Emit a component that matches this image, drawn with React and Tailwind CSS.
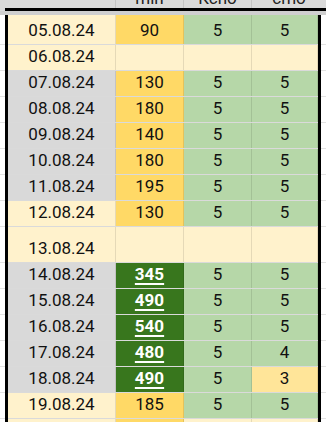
const Y = "bg-[#fff2cc]";
const O = "bg-[#ffd966]";
const G = "bg-[#b6d7a8]";
const D = "bg-[#38761d]";
const GR = "bg-[#d9d9d9]";
const P = "bg-[#ffe599]";

const rows = [
  { date: "05.08.24", dc: Y, min: "90", mc: O, a: "5", ac: G, b: "5", bc: G, h: "h-[30px]" },
  { date: "06.08.24", dc: Y, min: "", mc: Y, a: "", ac: Y, b: "", bc: Y },
  { date: "07.08.24", dc: GR, min: "130", mc: O, a: "5", ac: G, b: "5", bc: G },
  { date: "08.08.24", dc: GR, min: "180", mc: O, a: "5", ac: G, b: "5", bc: G },
  { date: "09.08.24", dc: GR, min: "140", mc: O, a: "5", ac: G, b: "5", bc: G },
  { date: "10.08.24", dc: GR, min: "180", mc: O, a: "5", ac: G, b: "5", bc: G },
  { date: "11.08.24", dc: GR, min: "195", mc: O, a: "5", ac: G, b: "5", bc: G },
  { date: "12.08.24", dc: Y, min: "130", mc: O, a: "5", ac: G, b: "5", bc: G },
  { date: "13.08.24", dc: Y, min: "", mc: Y, a: "", ac: Y, b: "", bc: Y, h: "h-[36px]" },
  { date: "14.08.24", dc: GR, min: "345", mc: D, a: "5", ac: G, b: "5", bc: G, big: true },
  { date: "15.08.24", dc: GR, min: "490", mc: D, a: "5", ac: G, b: "5", bc: G, big: true },
  { date: "16.08.24", dc: GR, min: "540", mc: D, a: "5", ac: G, b: "5", bc: G, big: true },
  { date: "17.08.24", dc: GR, min: "480", mc: D, a: "5", ac: G, b: "4", bc: G, big: true },
  { date: "18.08.24", dc: GR, min: "490", mc: D, a: "5", ac: G, b: "3", bc: P, big: true },
  { date: "19.08.24", dc: Y, min: "185", mc: O, a: "5", ac: G, b: "5", bc: G },
  { date: "", dc: Y, min: "", mc: O, a: "", ac: Y, b: "", bc: Y },
];

// sheet cells are bottom-aligned like in Google Sheets
const Cell = ({ w, bg, children, big }) => (
  <div
    className={`${w} ${bg} flex items-end justify-center pb-[1px] border-r border-black/10 ${
      big ? "text-white font-bold underline underline-offset-[3px] decoration-[1.5px]" : "text-[#111]"
    }`}
  >
    {children}
  </div>
);

export default function App() {
  return (
    <div className="w-[326px] h-[422px] overflow-hidden bg-[#f3f3f3] font-['Roboto',sans-serif] text-[17px]">
      <div className="flex h-[8px] overflow-hidden bg-[#dadada] text-[#222]">
        <div className="w-[116px] border-r border-[#c4c4c4]" />
        {["min", "Kcno", "cmo"].map((t, i) => (
          <div
            key={t}
            className={`${i === 2 ? "w-[74px]" : "w-[68px] border-r border-[#c4c4c4]"} overflow-hidden`}
          >
            <div className="-mt-[12px] leading-[20px] text-center">{t}</div>
          </div>
        ))}
      </div>
      <div className="flex h-[3px]">
        <div className="w-[5px] bg-[#dadada]" />
        <div className="flex-1 bg-black" />
      </div>
      <div className="h-[4px] bg-[#cfcfcf]" />
      {rows.map((r, i) => (
        <div key={i} className={`flex ${r.h || "h-[26px]"}`}>
          <div className="w-[5px] bg-white border-b border-[#e2e2e2]" />
          <div className="w-[3px] bg-black" />
          <div className="flex flex-1 border-b border-black/10">
            <Cell w="w-[108px]" bg={r.dc}>{r.date}</Cell>
            <Cell w="w-[68px]" bg={r.mc} big={r.big}>{r.min}</Cell>
            <Cell w="w-[68px]" bg={r.ac}>{r.a}</Cell>
            <Cell w="w-[66px]" bg={r.bc}>{r.b}</Cell>
          </div>
          <div className="w-[3px] bg-black" />
          <div className="w-[5px] bg-white border-b border-[#e2e2e2]" />
        </div>
      ))}
    </div>
  );
}
